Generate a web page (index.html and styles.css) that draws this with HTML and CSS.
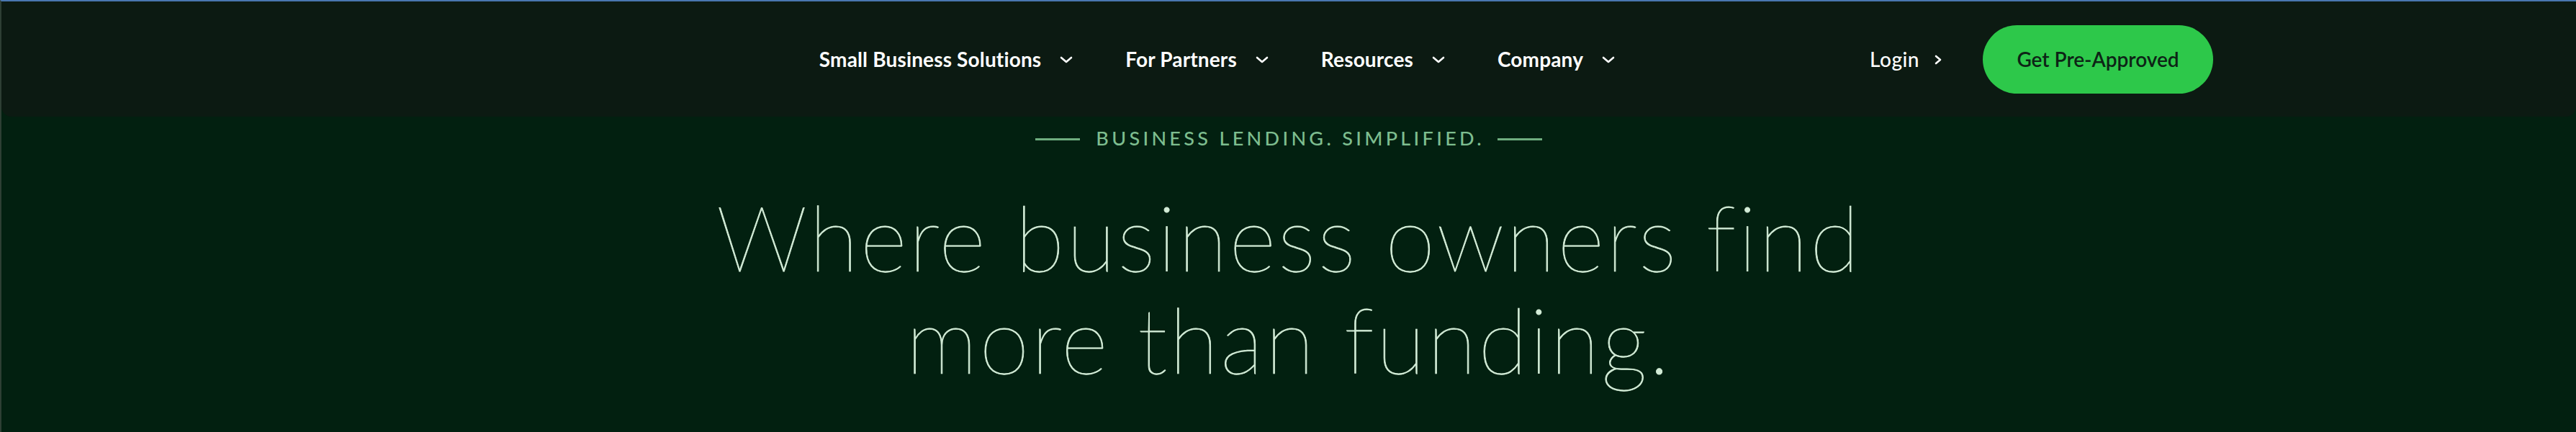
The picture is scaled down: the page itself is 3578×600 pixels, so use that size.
FILE: index.html
```html
<!DOCTYPE html>
<html lang="en">
<head>
<meta charset="utf-8">
<title>Business Lending. Simplified.</title>
<link rel="stylesheet" href="styles.css">
</head>
<body>
<div class="page">
  <header class="site-header">
    <div class="header-inner">
      <nav class="main-nav">
        <a class="nav-item" href="#">Small Business Solutions
          <svg class="chev" viewBox="0 0 18 10" width="18" height="10"><polyline points="2,2 9,8 16,2" fill="none" stroke="#fff" stroke-width="2.6" stroke-linecap="round" stroke-linejoin="round"/></svg></a>
        <a class="nav-item" href="#">For Partners
          <svg class="chev" viewBox="0 0 18 10" width="18" height="10"><polyline points="2,2 9,8 16,2" fill="none" stroke="#fff" stroke-width="2.6" stroke-linecap="round" stroke-linejoin="round"/></svg></a>
        <a class="nav-item" href="#">Resources
          <svg class="chev" viewBox="0 0 18 10" width="18" height="10"><polyline points="2,2 9,8 16,2" fill="none" stroke="#fff" stroke-width="2.6" stroke-linecap="round" stroke-linejoin="round"/></svg></a>
        <a class="nav-item" href="#">Company
          <svg class="chev" viewBox="0 0 18 10" width="18" height="10"><polyline points="2,2 9,8 16,2" fill="none" stroke="#fff" stroke-width="2.6" stroke-linecap="round" stroke-linejoin="round"/></svg></a>
      </nav>
      <div class="actions">
        <a class="login" href="#">Login
          <svg class="chev-r" viewBox="0 0 10 14" width="10" height="14"><polyline points="2,2 8,7 2,12" fill="none" stroke="#fff" stroke-width="2.6" stroke-linecap="round" stroke-linejoin="round"/></svg></a>
        <a class="cta" href="#">Get Pre-Approved</a>
      </div>
    </div>
  </header>
  <section class="hero">
    <div class="eyebrow"><span class="rule"></span><span class="eyebrow-text">BUSINESS LENDING. SIMPLIFIED.</span><span class="rule"></span></div>
    <h1 class="headline">Where business owners find<br>more than funding.</h1>
  </section>
</div>
</body>
</html>
```
FILE: styles.css
```css
html, body {
  margin: 0;
  padding: 0;
  background: #022010;
  height: 100%;
  overflow: hidden;
}
.page {
  min-height: 600px;
  box-sizing: border-box;
  border-top: 2px solid #4a77b0;
  border-left: 2px solid #2e3f34;
  background: #022010;
  font-family: Lato, "Liberation Sans", sans-serif;
}
.site-header {
  height: 160px;
  background: #0c1a12;
  border-radius: 0 0 14px 14px;
}
.header-inner {
  width: 2568px;
  margin: 0 auto;
  height: 100%;
  display: flex;
  align-items: center;
  justify-content: flex-end;
}
.main-nav {
  display: flex;
  align-items: center;
  gap: 73px;
  margin-right: 354px;
}
.nav-item, .login {
  color: #ffffff;
  text-decoration: none;
  font-size: 28px;
  font-weight: 700;
  letter-spacing: 0.15px;
  display: flex;
  align-items: center;
  gap: 26px;
  white-space: nowrap;
}
.chev { display: block; margin-top: 2px; }
.actions {
  display: flex;
  align-items: center;
  gap: 57px;
}
.login {
  font-weight: 500;
  gap: 21px;
  letter-spacing: 0.5px;
}
.chev-r { display: block; margin-top: 2px; }
.cta {
  display: flex;
  align-items: center;
  justify-content: center;
  width: 320px;
  height: 95px;
  border-radius: 48px;
  background: #2dc84a;
  color: #0d2416;
  text-decoration: none;
  font-size: 28px;
  font-weight: 600;
}
.hero {
  padding-top: 14px;
  text-align: center;
}
.eyebrow {
  display: flex;
  align-items: center;
  justify-content: center;
  gap: 22px;
  height: 32px;
  color: #7dbd8f;
}
.eyebrow-text {
  font-size: 27px;
  line-height: 32px;
  font-weight: 500;
  letter-spacing: 0.16em;
  margin-right: -0.16em;
}
.rule {
  width: 62px;
  height: 3px;
  background: #6fae80;
  margin-top: 2px;
}
.headline {
  margin: 50px 0 0;
  font-size: 126px;
  line-height: 142px;
  font-weight: 100;
  color: #d3ecd7;
  -webkit-text-stroke: 0.9px #d3ecd7;
  letter-spacing: 2.6px;
}
```
